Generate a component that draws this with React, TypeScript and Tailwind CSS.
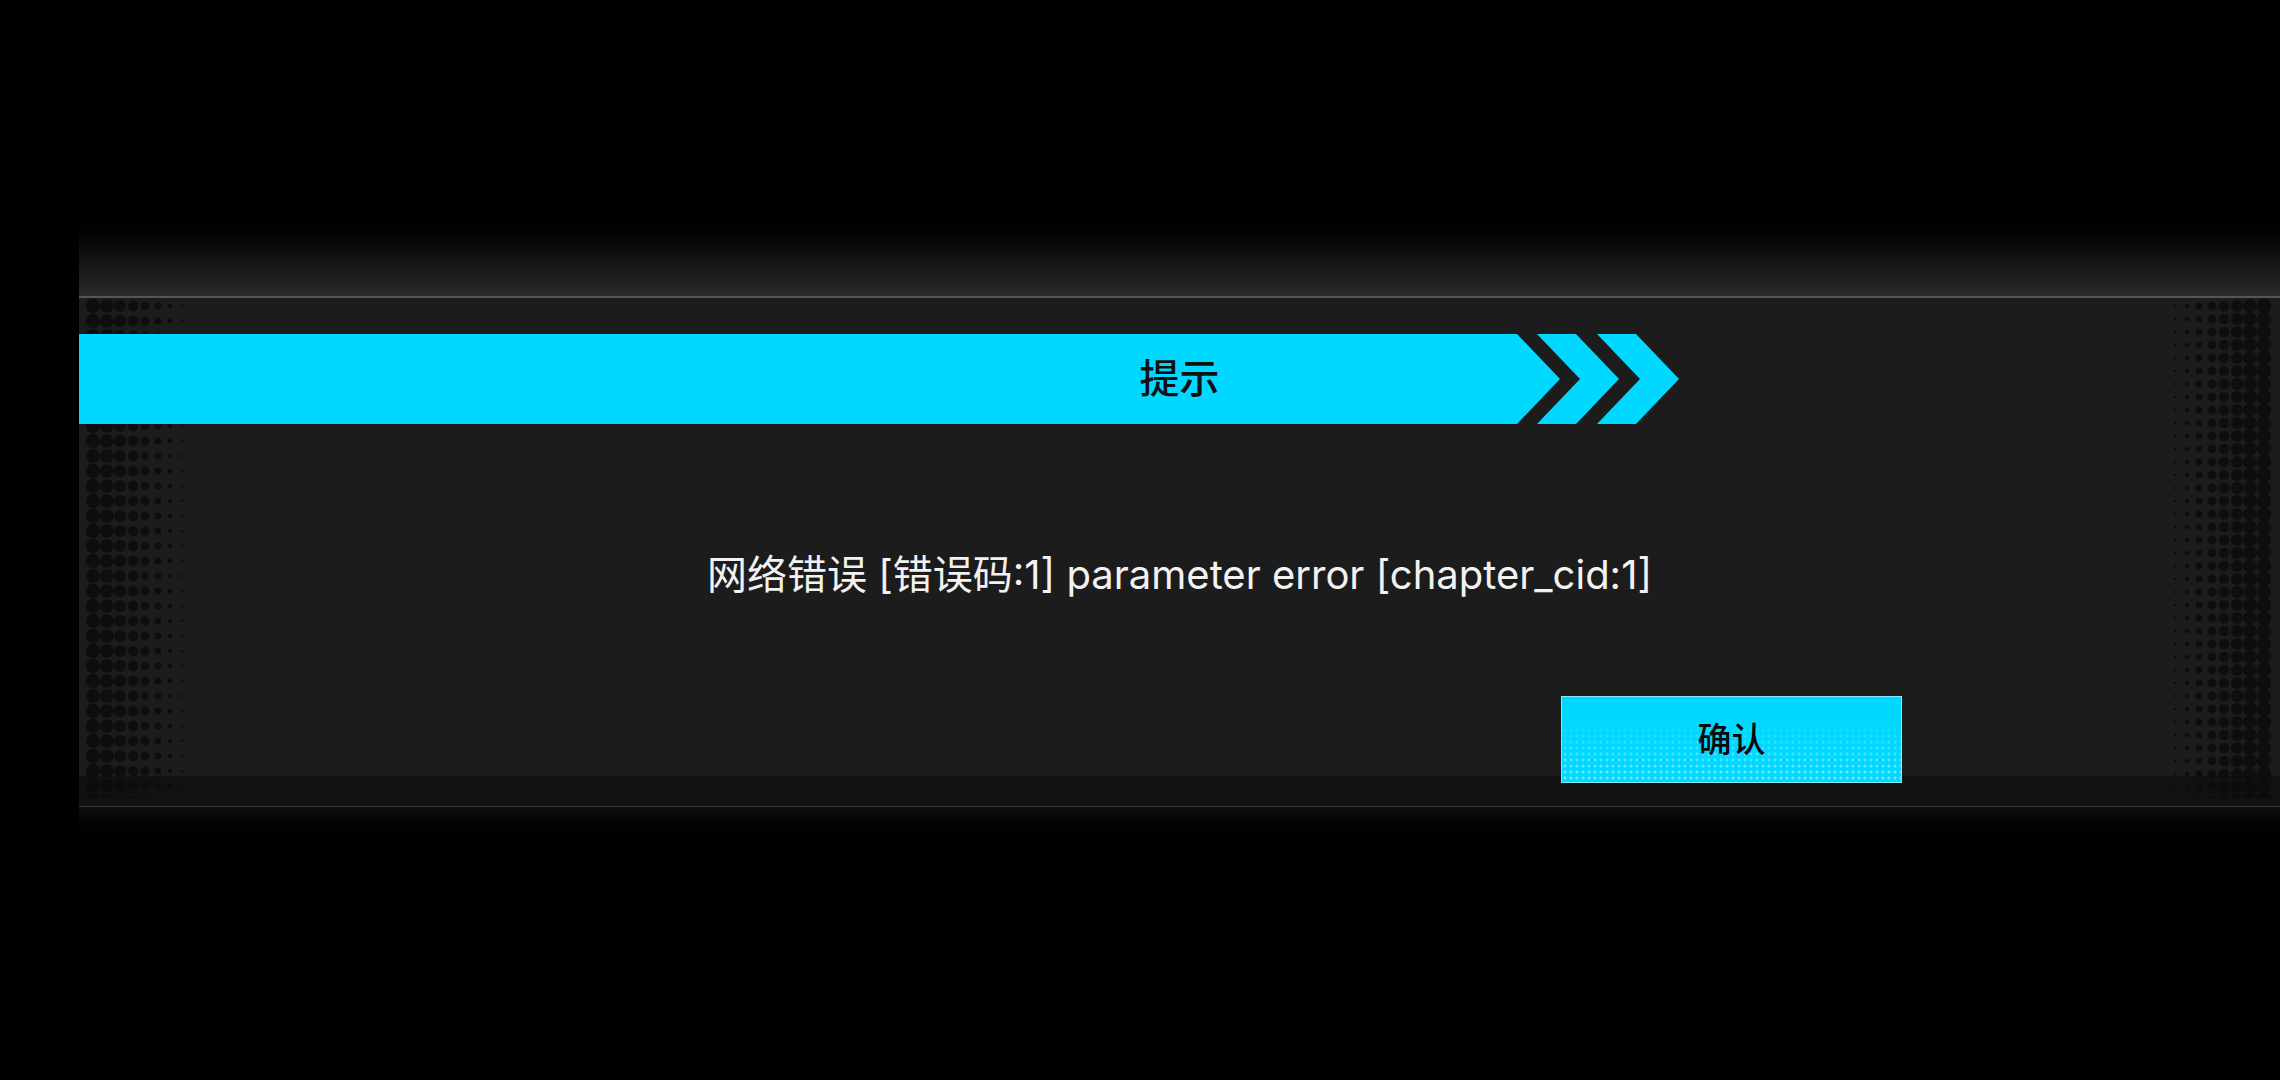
import React from 'react';

const cjk = { fontFamily: 'Inter, "Noto Sans CJK SC", sans-serif' };

// halftone dots on the panel edges
const DotStrip = ({ side }: { side: 'left' | 'right' }) => {
  const leftCols = [
    { x: 14, r: 7.2 },
    { x: 28, r: 6.8 },
    { x: 41, r: 6 },
    { x: 54, r: 5.2 },
    { x: 66, r: 4.3 },
    { x: 79, r: 3.3 },
    { x: 91, r: 2.2 },
    { x: 103, r: 1.2 },
  ];
  const cols = side === 'left' ? leftCols : leftCols.map((c) => ({ x: 106 - c.x, r: c.r }));
  const step = side === 'left' ? 15 : 13;
  const rows = Array.from({ length: 40 }, (_, i) => 8 + i * step);
  return (
    <svg
      width="108"
      height="500"
      className={`absolute top-0 ${side === 'left' ? 'left-0' : 'right-0'} pointer-events-none`}
    >
      {rows.map((y) =>
        cols.map((c) => <circle key={`${y}-${c.x}`} cx={c.x} cy={y} r={c.r} fill="#0c0c0c" opacity={0.85} />)
      )}
    </svg>
  );
};

const TitleBar = () => (
  <div className="relative h-[90px] w-full flex items-center justify-center">
    <svg width="1610" height="90" className="absolute left-0 top-0">
      <polygon points="0,0 1438,0 1481,45 1438,90 0,90" fill="#00d8ff" />
      <polygon points="1458,0 1497,0 1540,45 1497,90 1458,90 1501,45" fill="#00d8ff" />
      <polygon points="1518,0 1557,0 1600,45 1557,90 1518,90 1561,45" fill="#00d8ff" />
    </svg>
    <span className="relative text-[40px] font-medium text-[#111] leading-none" style={cjk}>
      提示
    </span>
  </div>
);

const ConfirmButton = () => (
  <button className="relative z-10 self-end mr-[378px] mb-[-7px] w-[341px] h-[87px] bg-[#00d8ff] border border-[#86e8fb] flex items-center justify-center overflow-hidden">
    <span className="absolute inset-0 bg-[radial-gradient(circle,rgba(140,238,255,0.75)_1.3px,transparent_1.8px)] bg-[length:6px_6px] [mask-image:linear-gradient(to_bottom,transparent_25%,black_90%)]" />
    <span className="relative text-[34px] font-medium text-[#0a0a0a] leading-none" style={cjk}>
      确认
    </span>
  </button>
);

export default function App() {
  return (
    <div className="w-full h-[1080px] bg-black pl-[79px] flex flex-col overflow-hidden">
      <div className="h-[200px] shrink-0" />
      <div className="h-[96px] shrink-0 bg-gradient-to-b from-black via-[#0c0c0c] to-[#2a2a2a]" />
      <div className="h-[2px] shrink-0 bg-[#565656]" />
      <div className="relative h-[478px] shrink-0 bg-[#1c1c1c] flex flex-col">
        <DotStrip side="left" />
        <DotStrip side="right" />
        <div className="h-[36px] shrink-0" />
        <TitleBar />
        <p
          className="relative mt-[125px] text-center text-[40px] leading-[52px] text-[#f2f2f2]"
          style={cjk}
        >
          网络错误 [错误码:1] parameter error [chapter_cid:1]
        </p>
        <div className="h-[95px] shrink-0" />
        <ConfirmButton />
      </div>
      <div className="h-[30px] shrink-0 bg-[#111]" />
      <div className="h-[1px] shrink-0 bg-[#3a3a3a]" />
      <div className="h-[44px] shrink-0 bg-gradient-to-b from-[#0e0e0e] to-black" />
    </div>
  );
}
